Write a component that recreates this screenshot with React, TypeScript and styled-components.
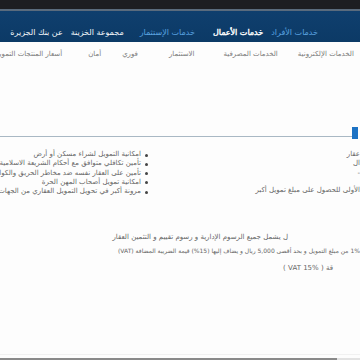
import React from "react";
import styled, { createGlobalStyle } from "styled-components";

const GlobalStyle = createGlobalStyle`
  html, body { margin: 0; padding: 0; background: #fdfdfd; overflow: hidden; }
  body { width: 360px; height: 360px; }
  *, *::before, *::after { box-sizing: border-box; }
`;

const Page = styled.div`
  direction: rtl;
  width: 360px;
  height: 360px;
  overflow: hidden;
  display: flex;
  flex-direction: column;
  font-family: "DejaVu Sans", "Noto Sans", sans-serif;
  background: #fdfdfd;
`;

const TopBar = styled.div`
  height: 11px;
  flex-shrink: 0;
  background: #1d1e22;
  border-bottom: 2px solid #5a6b7d;
`;

const MainNav = styled.nav`
  height: 31px;
  flex-shrink: 0;
  background: linear-gradient(#0f3f6e, #0c3a66);
  display: flex;
  align-items: flex-end;
  padding: 0 42px 3px 0;
  white-space: nowrap;
`;

const NavItem = styled.span<{ $tone: "blue" | "white" | "bold"; $space: number }>`
  font-size: 8px;
  line-height: 12px;
  margin-left: ${(p) => p.$space}px;
  color: ${(p) => (p.$tone === "blue" ? "#5aa3e0" : "#f4f7fa")};
  -webkit-text-stroke: ${(p) => (p.$tone === "bold" ? "0.4px #ffffff" : "0")};
`;

const SubNav = styled.nav`
  height: 23px;
  flex-shrink: 0;
  display: flex;
  align-items: flex-start;
  padding-top: 8px;
  margin-right: -26px;
  white-space: nowrap;
  background: #fdfdfd;
`;

const SubItem = styled.span<{ $space: number }>`
  font-size: 7px;
  line-height: 9px;
  color: #7a7a7a;
  margin-left: ${(p) => p.$space}px;
`;

const SectionHeader = styled.div`
  margin-top: 62px;
  height: 12px;
  display: flex;
  align-items: flex-end;
  padding-right: 2px;
  flex-shrink: 0;
`;

const BlueMark = styled.div`
  width: 6px;
  height: 12px;
  background: #1c72c4;
`;

const HeaderLine = styled.div`
  flex: 1;
  height: 1px;
  margin-bottom: 2px;
  background: #a9b8c4;
`;

const Columns = styled.div`
  margin-top: 11px;
  display: flex;
  flex-shrink: 0;
  white-space: nowrap;
`;

const RightColumn = styled.ul`
  list-style: none;
  margin: 0;
  padding: 0;
  width: 211px;
  flex-shrink: 0;
`;

const LeftColumn = styled.ul`
  list-style: none;
  margin: 0;
  padding: 0;
  flex: 1;
  min-width: 0;
`;

const Line = styled.li<{ $bullet?: boolean; $gapAbove?: number }>`
  position: relative;
  font-size: 7px;
  line-height: 9.3px;
  color: #666;
  padding-right: ${(p) => (p.$bullet ? "8px" : "0")};
  margin-top: ${(p) => p.$gapAbove ?? 0}px;
  &::before {
    content: ${(p) => (p.$bullet ? '""' : "none")};
    position: absolute;
    right: 1px;
    top: 3.5px;
    width: 3px;
    height: 3px;
    border-radius: 50%;
    background: #444;
  }
`;

const Notes = styled.div`
  margin-top: 37px;
  display: flex;
  flex-direction: column;
  white-space: nowrap;
  flex-shrink: 0;
`;

const Note = styled.p<{ $right: number; $gapAbove: number; $size: number }>`
  margin: ${(p) => p.$gapAbove}px ${(p) => p.$right}px 0 0;
  font-size: ${(p) => p.$size}px;
  line-height: 9px;
  color: #666;
`;

const Spacer = styled.div`
  flex: 1;
`;

const Footer = styled.div`
  flex-shrink: 0;
  height: 6px;
  border-top: 1px solid #f1f1f1;
  display: flex;
  align-items: flex-end;
`;

const FooterRule = styled.div<{ $dark: boolean }>`
  height: 2px;
  width: ${(p) => (p.$dark ? "337px" : "23px")};
  background: ${(p) => (p.$dark ? "#8a8a8a" : "#e2e2e2")};
`;

export default function App() {
  return (
    <>
      <GlobalStyle />
      <Page>
        <TopBar />
        <MainNav>
          <NavItem $tone="blue" $space={8}>خدمات الأفراد</NavItem>
          <NavItem $tone="bold" $space={18}>خدمات الأعمال</NavItem>
          <NavItem $tone="blue" $space={16}>خدمات الإستثمار</NavItem>
          <NavItem $tone="white" $space={8}>مجموعة الخزينة</NavItem>
          <NavItem $tone="white" $space={0}>عن بنك الجزيرة</NavItem>
        </MainNav>
        <SubNav>
          <SubItem $space={11}>التمويل</SubItem>
          <SubItem $space={20}>الخدمات الإلكترونية</SubItem>
          <SubItem $space={29}>الخدمات المصرفية</SubItem>
          <SubItem $space={31}>الاستثمار</SubItem>
          <SubItem $space={21}>فوري</SubItem>
          <SubItem $space={26}>أمان</SubItem>
          <SubItem $space={0}>أسعار المنتجات التمويلية و الادخارية</SubItem>
        </SubNav>
        <SectionHeader>
          <BlueMark />
          <HeaderLine />
        </SectionHeader>
        <Columns>
          <RightColumn>
            <Line>عقار</Line>
            <Line>ال</Line>
            <Line>-</Line>
            <Line $gapAbove={8}>الأولى للحصول على مبلغ تمويل أكبر</Line>
          </RightColumn>
          <LeftColumn>
            <Line $bullet>امكانية التمويل لشراء مسكن أو أرض</Line>
            <Line $bullet>تأمين تكافلي متوافق مع أحكام الشريعة الاسلامية يغطي مبلغ التمويل</Line>
            <Line $bullet>تأمين على العقار نفسه ضد مخاطر الحريق والكوارث الطبيعية</Line>
            <Line $bullet>امكانية تمويل أصحاب المهن الحرة</Line>
            <Line $bullet>مرونة أكبر في تحويل التمويل العقاري من الجهات الأخرى</Line>
          </LeftColumn>
        </Columns>
        <Notes>
          <Note $right={72} $gapAbove={0} $size={7}>ل يشمل جميع الرسوم الإدارية و رسوم تقييم و التثمين العقار</Note>
          <Note $right={0} $gapAbove={4} $size={6}>1% من مبلغ التمويل و بحد أقصى 5,000 ريال و يضاف إليها (15%) قيمة الضريبة المضافة (VAT)</Note>
          <Note $right={27} $gapAbove={9} $size={7}>قة ( VAT 15% )</Note>
        </Notes>
        <Spacer />
        <Footer>
          <FooterRule $dark={false} />
          <FooterRule $dark={true} />
        </Footer>
      </Page>
    </>
  );
}
